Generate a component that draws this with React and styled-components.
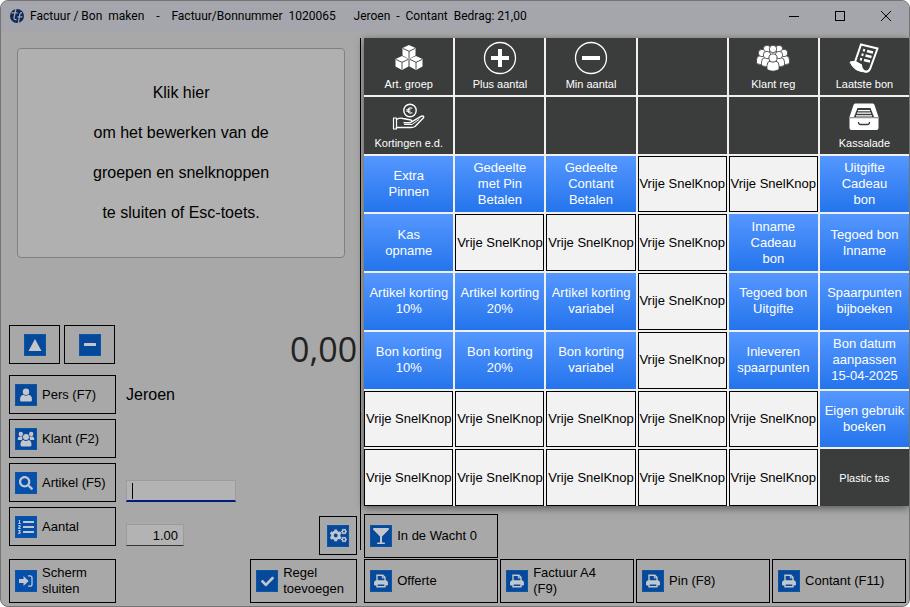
import React, { useState } from 'react';
import styled, { createGlobalStyle, css } from 'styled-components';
import { FaCheck, FaCogs, FaListOl, FaSearch, FaGlassMartini } from 'react-icons/fa';

const quickKeys = [
  { kind: 'dark', label: 'Art. groep', icon: 'cubes' },
  { kind: 'dark', label: 'Plus aantal', icon: 'plus' },
  { kind: 'dark', label: 'Min aantal', icon: 'min' },
  { kind: 'dark' },
  { kind: 'dark', label: 'Klant reg', icon: 'crowd' },
  { kind: 'dark', label: 'Laatste bon', icon: 'receipt' },

  { kind: 'dark', label: 'Kortingen e.d.', icon: 'hand' },
  { kind: 'dark' },
  { kind: 'dark' },
  { kind: 'dark' },
  { kind: 'dark' },
  { kind: 'dark', label: 'Kassalade', icon: 'drawer' },

  { kind: 'blue', label: 'Extra\nPinnen' },
  { kind: 'blue', label: 'Gedeelte\nmet Pin\nBetalen' },
  { kind: 'blue', label: 'Gedeelte\nContant\nBetalen' },
  { kind: 'free' },
  { kind: 'free' },
  { kind: 'blue', label: 'Uitgifte\nCadeau\nbon' },

  { kind: 'blue', label: 'Kas\nopname' },
  { kind: 'free' },
  { kind: 'free' },
  { kind: 'free' },
  { kind: 'blue', label: 'Inname\nCadeau\nbon' },
  { kind: 'blue', label: 'Tegoed bon\nInname' },

  { kind: 'blue', label: 'Artikel korting\n10%' },
  { kind: 'blue', label: 'Artikel korting\n20%' },
  { kind: 'blue', label: 'Artikel korting\nvariabel' },
  { kind: 'free' },
  { kind: 'blue', label: 'Tegoed bon\nUitgifte' },
  { kind: 'blue', label: 'Spaarpunten\nbijboeken' },

  { kind: 'blue', label: 'Bon korting\n10%' },
  { kind: 'blue', label: 'Bon korting\n20%' },
  { kind: 'blue', label: 'Bon korting\nvariabel' },
  { kind: 'free' },
  { kind: 'blue', label: 'Inleveren\nspaarpunten' },
  { kind: 'blue', label: 'Bon datum\naanpassen\n15-04-2025' },

  { kind: 'free' },
  { kind: 'free' },
  { kind: 'free' },
  { kind: 'free' },
  { kind: 'free' },
  { kind: 'blue', label: 'Eigen gebruik\nboeken' },

  { kind: 'free' },
  { kind: 'free' },
  { kind: 'free' },
  { kind: 'free' },
  { kind: 'free' },
  { kind: 'dark', label: 'Plastic tas' },
];

const Cube = ({ x, y }) => (
  <g transform={`translate(${x} ${y})`}>
    <path d="M7 0 L13.5 3 L13.5 10.500 L7 14 L0.500 10.500 L0.500 3 Z" fill="#fff" />
    <path d="M1 3.500 L7 6.300 L13 3.500 M7 6.300 V13.500" fill="none" stroke="#3b3c3c" strokeWidth="0.9" />
  </g>
);

const Person = ({ x, y, s = 1 }) => (
  <g transform={`translate(${x} ${y}) scale(${s})`} stroke="#3b3c3c" strokeWidth="0.8">
    <path d="M-5.500 10.500 V7 Q-5.500 3 -2 2.600 H2 Q5.500 3 5.500 7 V10.500 Q0 13.500 -5.500 10.500 Z" fill="#fff" />
    <circle r="3.700" fill="#fff" />
  </g>
);

const keyIcons = {
  cubes: (
    <svg width="28" height="28" viewBox="0 0 28 28">
      <Cube x={7} y={1} />
      <Cube x={0} y={12} />
      <Cube x={14} y={12} />
    </svg>
  ),
  plus: (
    <svg width="34" height="34" viewBox="0 0 34 34" fill="none" stroke="#fff">
      <circle cx="17" cy="17" r="15.500" strokeWidth="1.300" />
      <path d="M8 17 H26 M17 8 V26" strokeWidth="4" />
    </svg>
  ),
  min: (
    <svg width="34" height="34" viewBox="0 0 34 34" fill="none" stroke="#fff">
      <circle cx="17" cy="17" r="15.500" strokeWidth="1.300" />
      <path d="M8 17 H26" strokeWidth="4" />
    </svg>
  ),
  crowd: (
    <svg width="34" height="28" viewBox="0 0 34 28">
      <Person x={11} y={5} />
      <Person x={23} y={5} />
      <Person x={17} y={5} />
      <Person x={6} y={9} />
      <Person x={28} y={9} />
      <Person x={11} y={11} />
      <Person x={23} y={11} />
      <Person x={17} y={14} s={1.1} />
    </svg>
  ),
  receipt: (
    <svg width="32" height="32" viewBox="0 0 32 32" fill="none" stroke="#fff">
      <path d="M13 2.500 L29.500 6.500 L22 27 Q20 31 16 29 Q13 27 13 23 L7 20 Z" strokeWidth="2" />
      <path d="M2 20 Q8 18 13 23.500 Q14 29 18 30 Q6 30 2 20 Z" fill="#fff" strokeWidth="1" />
      <path d="M15 8 l2 .5 M19 9 l6 1.500 M13.500 12.500 l2 .5 M17.500 13.500 l6 1.500 M12 17 l2 .5 M16 18 l6 1.500" strokeWidth="2.400" />
    </svg>
  ),
  hand: (
    <svg width="34" height="28" viewBox="0 0 34 28" fill="none" stroke="#fff" strokeLinejoin="round" strokeLinecap="round">
      <circle cx="18" cy="7.500" r="6.200" strokeWidth="1.400" />
      <path d="M20 5.200 Q16.200 4 16 7.500 Q16.200 11 20 9.800 M14.700 6.800 H18 M14.700 8.300 H18" strokeWidth="1.100" />
      <path d="M1.500 15 H4.500 V26 H1.500 Z" strokeWidth="1.200" />
      <path d="M4.500 16.500 Q8 14.500 11 15.500 L19 17 Q20.500 18.500 18.500 19.700 H12 M20 18.700 L29.500 13.200 Q32.500 12.500 31.500 14.800 L23 23.500 Q21.500 24.500 19 24.500 H4.500" strokeWidth="1.400" />
      <path d="M12.500 21.500 H20 L27 16.500" strokeWidth="1" />
    </svg>
  ),
  drawer: (
    <svg width="32" height="30" viewBox="0 0 32 30">
      <path d="M7 1.500 H25 Q26 1.500 26.500 3 L30.500 15 V26 Q30.500 28 28.500 28 H3.500 Q1.500 28 1.500 26 V15 L5.500 3 Q6 1.500 7 1.500 Z" fill="#fff" />
      <path d="M9.500 6 H22.500 L26 15 H6 Z" fill="#3b3c3c" />
      <path d="M10 8.600 H22 M9 11.200 H23 M8 13.800 H24" stroke="#fff" strokeWidth="1.200" />
      <path d="M2 15.700 H30" stroke="#3b3c3c" strokeWidth="0.700" />
      <path d="M10.500 20 Q10.500 22.500 12.500 22.500 H19.500 Q21.500 22.500 21.500 20" fill="none" stroke="#3b3c3c" strokeWidth="1.300" />
    </svg>
  ),
};

const LogoIcon = () => (
  <svg width="16" height="16" viewBox="0 0 16 16">
    <circle cx="8" cy="8" r="7" fill="#0d2a57" />
    <path d="M7 0.500 L5 9.500 Q4.800 11.800 7.500 11.500 M2.500 4.800 H8.500 M9.300 15.500 L10.700 7 Q11 4.500 13 4.800 M8.500 8.800 H13.500" fill="none" stroke="#a5a6ad" strokeWidth="1.300" />
  </svg>
);

const TriangleIcon = () => (
  <svg width="14" height="14" viewBox="0 0 14 14"><path d="M7 1 L13.500 13 H0.500 Z" fill="currentColor" /></svg>
);

const DashIcon = () => (
  <svg width="14" height="14" viewBox="0 0 14 14"><rect x="1" y="5" width="12" height="3" rx="0.500" fill="currentColor" /></svg>
);

const UserIcon = () => (
  <svg width="14" height="14" viewBox="0 0 14 14" fill="currentColor">
    <circle cx="7" cy="3.700" r="3.200" />
    <path d="M1 12 Q1 7 4.500 6.800 Q7 8.600 9.500 6.800 Q13 7 13 12 Q13 13.500 11.500 13.500 H2.500 Q1 13.500 1 12 Z" />
  </svg>
);

const GroupIcon = () => (
  <svg width="18" height="16" viewBox="0 0 18 16" fill="currentColor">
    <circle cx="3.800" cy="3" r="2.200" />
    <circle cx="14.200" cy="3" r="2.200" />
    <path d="M0.800 9 Q0.500 5.500 3 5.500 H5.500 L5 9 Z M17.200 9 Q17.500 5.500 15 5.500 H12.500 L13 9 Z" />
    <circle cx="9" cy="6" r="3" />
    <path d="M3.500 14 Q3.500 9.500 6.300 9 Q9 11 11.700 9 Q14.500 9.500 14.500 14 Q14.500 15.500 13 15.500 H5 Q3.500 15.500 3.500 14 Z" />
  </svg>
);

const PrintIcon = () => (
  <svg width="16" height="16" viewBox="0 0 16 16" fill="none" stroke="currentColor" strokeWidth="1.400">
    <path d="M4 8 V2.200 H9.800 L12 4.400 V8" />
    <path d="M9.300 2.500 V5 H12" strokeWidth="1" />
    <path d="M1.500 12 V9.500 Q1.500 7.800 3.200 7.800 H12.800 Q14.500 7.800 14.500 9.500 V12 Z" fill="currentColor" strokeWidth="1" />
    <path d="M4 10.800 H12 V13.700 H4 Z" fill="#06499a" />
  </svg>
);

const EnterIcon = () => (
  <svg width="16" height="14" viewBox="0 0 16 14" fill="currentColor">
    <path d="M1 5 H5.500 V2 L10.700 7 L5.500 12 V9 H1 Z" />
    <path d="M10 1.800 H12 Q14 1.800 14 3.800 V10.200 Q14 12.200 12 12.200 H10" fill="none" stroke="currentColor" strokeWidth="1.300" />
  </svg>
);

export default function App() {
  const [article, setArticle] = useState('');
  const [amount, setAmount] = useState('1.00');

  return (
    <Window>
      <GlobalStyle />
      <TitleBar>
        <LogoIcon />
        <Title>
          {'Factuur / Bon  maken    -    Factuur/Bonnummer  1020065      Jeroen  -  Contant  Bedrag: 21,00'}
        </Title>
        <CaptionButton aria-label="Minimaliseren">
          <svg width="10" height="10" viewBox="0 0 10 10"><path d="M0 5.500 H10" /></svg>
        </CaptionButton>
        <CaptionButton aria-label="Maximaliseren">
          <svg width="10" height="10" viewBox="0 0 10 10"><rect x="0.500" y="0.500" width="9" height="9" /></svg>
        </CaptionButton>
        <CaptionButton aria-label="Sluiten">
          <svg width="10" height="10" viewBox="0 0 10 10"><path d="M0 0 L10 10 M10 0 L0 10" /></svg>
        </CaptionButton>
      </TitleBar>

      <Body>
        <LeftSide>
          <LeftPanel>
            <CloseHint>
              <span>Klik hier</span>
              <span>om het bewerken van de</span>
              <span>groepen en snelknoppen</span>
              <span>te sluiten of Esc-toets.</span>
            </CloseHint>

            <TotalRow>
              <SquareButton $wide aria-label="Omhoog"><Tile><TriangleIcon /></Tile></SquareButton>
              <SquareButton $wide aria-label="Min"><Tile><DashIcon /></Tile></SquareButton>
              <Total>0,00</Total>
            </TotalRow>

            <Fields>
              <FieldRow>
                <ActionButton><Tile><UserIcon /></Tile>Pers (F7)</ActionButton>
                <PersonName>Jeroen</PersonName>
              </FieldRow>
              <FieldRow>
                <ActionButton><Tile><GroupIcon /></Tile>Klant (F2)</ActionButton>
              </FieldRow>
              <FieldRow>
                <ActionButton><Tile $bright><FaSearch size={14} /></Tile>Artikel (F5)</ActionButton>
                <ArticleBox>
                  <Caret />
                  <TextInput
                    aria-label="Artikel"
                    value={article}
                    onChange={e => setArticle(e.target.value)}
                  />
                </ArticleBox>
              </FieldRow>
              <AmountRow>
                <FieldRow>
                  <ActionButton><Tile $bright><FaListOl size={16} /></Tile>Aantal</ActionButton>
                  <AmountInput
                    aria-label="Aantal"
                    value={amount}
                    onChange={e => setAmount(e.target.value)}
                  />
                </FieldRow>
                <SettingsButton aria-label="Instellingen"><Tile><FaCogs size={17} /></Tile></SettingsButton>
              </AmountRow>
            </Fields>

            <LeftFooter>
              <ActionButton $tall><Tile $bright><EnterIcon /></Tile>{'Scherm\nsluiten'}</ActionButton>
              <ActionButton $tall><Tile><FaCheck size={13} /></Tile>{'Regel\ntoevoegen'}</ActionButton>
            </LeftFooter>
          </LeftPanel>
          <Divider />
        </LeftSide>

        <RightSide>
          <QuickKeys>
            {quickKeys.map((key, i) => {
              if (key.kind === 'free') return <FreeKey key={i}>Vrije SnelKnop</FreeKey>;
              if (key.kind === 'blue') return <BlueKey key={i}>{key.label}</BlueKey>;
              return (
                <DarkKey key={i} aria-label={key.label || 'Leeg'}>
                  {key.icon && <KeyIcon>{keyIcons[key.icon]}</KeyIcon>}
                  {key.label}
                </DarkKey>
              );
            })}
          </QuickKeys>

          <PayGrid>
            <PayButton $first><Tile><FaGlassMartini size={16} /></Tile>In de Wacht 0</PayButton>
            <PayButton $first><Tile><PrintIcon /></Tile>Offerte</PayButton>
            <PayButton><Tile><PrintIcon /></Tile>{'Factuur A4\n(F9)'}</PayButton>
            <PayButton><Tile><PrintIcon /></Tile>Pin (F8)</PayButton>
            <PayButton><Tile><PrintIcon /></Tile>Contant (F11)</PayButton>
          </PayGrid>
        </RightSide>
      </Body>
    </Window>
  );
}

const GlobalStyle = createGlobalStyle`
  * {
    box-sizing: border-box;
  }
  body {
    margin: 0;
    background: #fff;
    color: #000;
    font-family: 'Liberation Sans', Arial, sans-serif;
    font-size: 13px;
  }
  button, input {
    font: inherit;
    color: inherit;
    margin: 0;
    padding: 0;
    border-radius: 0;
  }
`;

const Window = styled.div`
  display: flex;
  flex-direction: column;
  min-height: 100vh;
  background: #a8a8a8;
  border: 1px solid #747474;
  border-radius: 8px;
  overflow: hidden;
`;

const TitleBar = styled.header`
  display: flex;
  align-items: center;
  height: 30px;
  padding-left: 8px;
  background: #a5a6ad;
`;

const Title = styled.h1`
  flex: 1;
  margin: 0 0 0 5px;
  font-family: Roboto, 'Segoe UI', sans-serif;
  font-size: 12px;
  font-weight: 400;
  line-height: 16px;
  white-space: pre;
`;

const CaptionButton = styled.button`
  display: flex;
  align-items: center;
  justify-content: center;
  width: 46px;
  height: 30px;
  border: none;
  background: none;

  svg {
    fill: none;
    stroke: #000;
  }
`;

const Body = styled.main`
  flex: 1;
  display: grid;
  grid-template-columns: minmax(0, 2fr) minmax(0, 3fr);
  padding-top: 7px;
`;

const LeftSide = styled.div`
  display: flex;
`;

const Divider = styled.div`
  width: 1px;
  margin: 0 3px 56px 3px;
  background: #000;
`;

const LeftPanel = styled.section`
  flex: 1;
  display: flex;
  flex-direction: column;
  padding: 10px 0 3px 8px;
`;

const CloseHint = styled.div`
  display: flex;
  flex-direction: column;
  align-items: center;
  margin: 0 12px auto 8px;
  padding: 24px 0;
  border: 1px solid #808080;
  border-radius: 4px;
  background: #b0b0b0;
  font-size: 16px;
  line-height: 40px;
`;

const TotalRow = styled.div`
  display: flex;
  align-items: flex-start;
  gap: 4px;
`;

const Total = styled.output`
  margin-left: auto;
  font-family: 'Open Sans', 'Segoe UI', sans-serif;
  font-size: 34px;
  line-height: 48px;
  color: #222;
`;

const Fields = styled.div`
  display: flex;
  flex-direction: column;
  gap: 5px;
  margin-top: 2px;
`;

const FieldRow = styled.div`
  display: flex;
  align-items: flex-end;
  gap: 10px;
`;

const AmountRow = styled.div`
  display: flex;
  align-items: flex-start;
  justify-content: space-between;
  height: 48px;
`;

const boxButton = css`
  display: flex;
  align-items: center;
  border: 1px solid #000;
  background: none;
  line-height: 16px;
  text-align: left;
  white-space: pre-line;
`;

const ActionButton = styled.button`
  ${boxButton}
  gap: 5px;
  width: 107px;
  height: ${p => (p.$tall ? '44px' : '39px')};
  padding-left: 5px;
`;

const SquareButton = styled.button`
  ${boxButton}
  justify-content: center;
  width: ${p => (p.$wide ? '51px' : '38px')};
  height: 39px;
`;

const SettingsButton = styled(SquareButton)`
  align-self: flex-end;
`;

const PayButton = styled.button`
  ${boxButton}
  gap: 5px;
  height: 44px;
  padding-left: 5px;
  ${p => p.$first && 'grid-column: 1;'}
`;

const Tile = styled.span`
  display: flex;
  align-items: center;
  justify-content: center;
  flex: none;
  width: 22px;
  height: 22px;
  border: 1px solid #0a56a5;
  background: ${p => (p.$bright ? '#0450ac' : '#06499a')};
  color: #c3c7cd;
`;

const PersonName = styled.span`
  align-self: center;
  font-size: 16px;
`;

const ArticleBox = styled.div`
  display: flex;
  align-items: center;
  width: 110px;
  height: 22px;
  padding-left: 5px;
  background: #b3b3b3;
  border: 1px solid #9b9ba1;
  border-bottom: 2px solid #001a80;
`;

const Caret = styled.span`
  width: 1px;
  height: 16px;
  background: #000;
`;

const TextInput = styled.input`
  flex: 1;
  min-width: 0;
  border: none;
  background: none;
  outline: none;
`;

const AmountInput = styled.input`
  width: 58px;
  height: 22px;
  padding-right: 5px;
  border: 1px solid #9b9b9b;
  border-bottom-color: #333;
  background: #b3b3b3;
  text-align: right;
`;

const LeftFooter = styled.div`
  display: flex;
  justify-content: space-between;
  margin-top: 4px;
`;

const RightSide = styled.section`
  display: flex;
  flex-direction: column;
`;

const QuickKeys = styled.div`
  flex: 1;
  display: grid;
  grid-template-columns: repeat(6, minmax(0, 1fr));
  grid-template-rows: repeat(8, minmax(56px, 1fr));
  gap: 2px;
  background: #f0f0f0;
  box-shadow: 0 2px 8px rgba(0, 0, 0, 0.5);
`;

const keyBase = css`
  display: flex;
  flex-direction: column;
  align-items: center;
  justify-content: center;
  border: none;
  line-height: 16px;
  text-align: center;
`;

const DarkKey = styled.button`
  ${keyBase}
  background: #3b3c3c;
  color: #fff;
  font-size: 11px;
`;

const BlueKey = styled.button`
  ${keyBase}
  background: linear-gradient(#5597ff, #2474ec);
  color: #fff;
  white-space: pre-line;
`;

const FreeKey = styled.button`
  ${keyBase}
  border: 1px solid #000;
  background: #f2f2f2;
  white-space: nowrap;
`;

const KeyIcon = styled.span`
  display: flex;
  align-items: center;
  justify-content: center;
  height: 36px;
`;

const PayGrid = styled.div`
  display: grid;
  grid-template-columns: repeat(4, minmax(0, 1fr));
  gap: 1px 2px;
  padding: 8px 3px 3px 0;
`;
